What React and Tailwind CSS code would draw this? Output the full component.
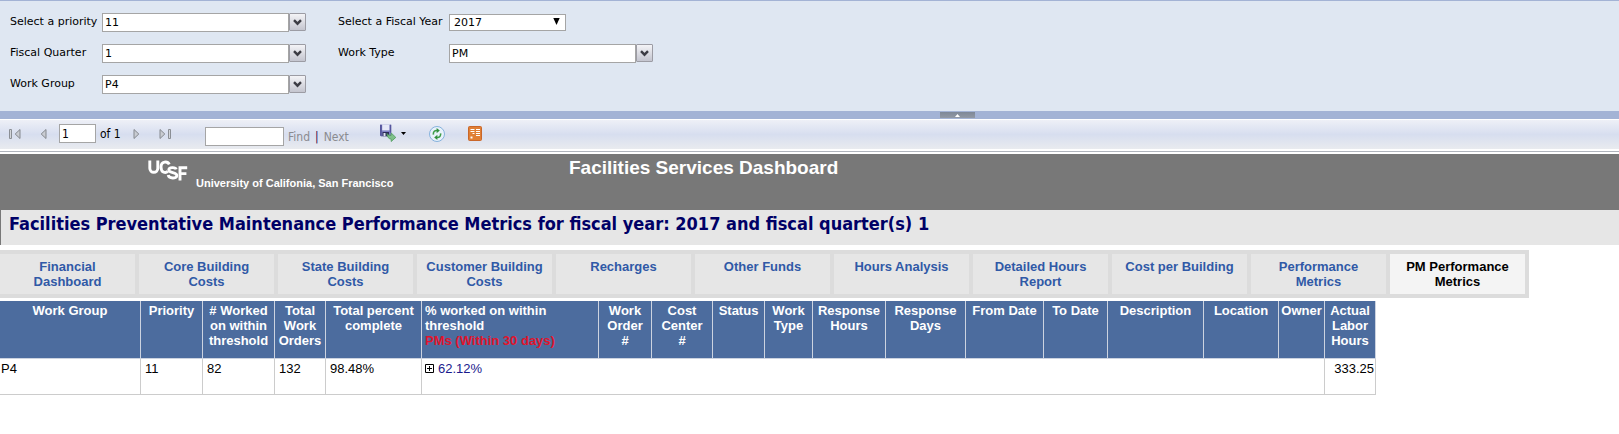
const tabs = [
  "Financial Dashboard",
  "Core Building Costs",
  "State Building Costs",
  "Customer Building Costs",
  "Recharges",
  "Other Funds",
  "Hours Analysis",
  "Detailed Hours Report",
  "Cost per Building",
  "Performance Metrics",
  "PM Performance Metrics",
];

const columns = [
  { label: "Work Group", col: "w-[141px]" },
  { label: "Priority", col: "w-[62px]" },
  { label: "# Worked on within threshold", col: "w-[72px]" },
  { label: "Total Work Orders", col: "w-[51px]" },
  { label: "Total percent complete", col: "w-[96px]" },
  {
    label: "% worked on within threshold",
    note: "PMs (Within 30 days)",
    col: "w-[177px]",
  },
  { label: "Work Order #", col: "w-[53px]", narrow: true },
  { label: "Cost Center #", col: "w-[61px]", narrow: true },
  { label: "Status", col: "w-[52px]" },
  { label: "Work Type", col: "w-[48px]" },
  { label: "Response Hours", col: "w-[73px]" },
  { label: "Response Days", col: "w-[80px]" },
  { label: "From Date", col: "w-[78px]" },
  { label: "To Date", col: "w-[64px]" },
  { label: "Description", col: "w-[96px]" },
  { label: "Location", col: "w-[75px]" },
  { label: "Owner", col: "w-[46px]" },
  { label: "Actual Labor Hours", col: "w-[51px]" },
];

function ComboField({ id, label, value }) {
  return (
    <>
      <label htmlFor={id}>{label}</label>
      <div className="flex items-start">
        <input
          id={id}
          defaultValue={value}
          className="h-[19px] w-[187px] border border-[#a5a5a5] bg-white px-0.5 outline-none"
        />
        <button
          type="button"
          aria-label={`Open ${label}`}
          className="flex h-[18px] w-[17px] items-center justify-center rounded-[1px] border border-[#9c9ca4] bg-linear-to-b from-[#f4f4f7] to-[#c4c5cf]"
        >
          <svg width="9" height="7" viewBox="0 0 9 7" fill="none">
            <path d="M1 1.2 4.5 4.7 8 1.2" stroke="#3c3c44" strokeWidth="2.4" />
          </svg>
        </button>
      </div>
    </>
  );
}

function Parameters() {
  return (
    <form className="flex h-[111px] items-start gap-8 border-t border-[#a3b3d5] bg-[#dfe7f2] pt-1.5 pl-2.5">
      <div className="grid auto-rows-[31px] grid-cols-[92px_204px] items-center">
        <ComboField id="priority" label="Select a priority" value="11" />
        <ComboField id="quarter" label="Fiscal Quarter" value="1" />
        <ComboField id="group" label="Work Group" value="P4" />
      </div>
      <div className="grid auto-rows-[31px] grid-cols-[111px_204px] items-center">
        <label htmlFor="year">Select a Fiscal Year</label>
        <div className="relative w-[117px]">
          <select
            id="year"
            defaultValue="2017"
            className="block h-[17px] w-full appearance-none border border-[#a5a5a5] bg-white pl-1 leading-none outline-none"
          >
            <option>2016</option>
            <option>2017</option>
          </select>
          <svg
            className="pointer-events-none absolute top-1 right-1.5"
            width="7"
            height="7"
            viewBox="0 0 7 7"
          >
            <path d="M.3 0h6.400L3.500 7z" fill="#000" />
          </svg>
        </div>
        <ComboField id="type" label="Work Type" value="PM" />
      </div>
    </form>
  );
}

function Splitter() {
  return (
    <div className="flex h-2 bg-[#a3b3d5]">
      <div className="w-[940px] shrink" />
      <button
        type="button"
        aria-label="Hide parameters"
        className="mt-px flex h-[6px] w-[35px] items-center justify-center bg-linear-to-b from-[#7e8897] to-[#9299a5]"
      >
        <svg width="5" height="3" viewBox="0 0 5 3">
          <path d="M0 3 2.5 0 5 3z" fill="#fff" />
        </svg>
      </button>
    </div>
  );
}

function PageArrow({ label, flip, bar, className }) {
  return (
    <button type="button" aria-label={label} className={className}>
      <svg
        width="12"
        height="12"
        viewBox="0 0 12 12"
        className={flip ? "rotate-180" : undefined}
      >
        {bar ? (
          <path d="M.5 1.500h2v9h-2z" fill="#d3d6da" stroke="#8b8f95" />
        ) : null}
        <path d="M11 1.500v9L6.200 6z" fill="#c9ccd2" stroke="#85898f" />
      </svg>
    </button>
  );
}

function SaveIcon() {
  return (
    <svg width="18" height="18" viewBox="0 0 18 18">
      <path d="M1 .8h11.200v11.500H2L1 11.300z" fill="#7f80c4" />
      <path d="M1 .8h1.800v11.500H2L1 11.300zM10.800.8h1.400v8h-1.400z" fill="#56569c" />
      <path d="M3.200.8h7.200v5.600H3.200z" fill="#e6e9f8" />
      <path d="M3.500 8h6.500v4.300H3.500z" fill="#2c2c58" />
      <path d="M4.500 9h2v3.300h-2z" fill="#dfe2f2" />
      <path
        d="M8 9.500c1 1.600 2.400 2 4.200 1.900V9l4.600 4.400-4.600 4.100v-2.400C9.800 15 8 13 8 9.500z"
        fill="#7fc08a"
        stroke="#4b9a58"
        strokeWidth=".8"
      />
    </svg>
  );
}

function RefreshIcon() {
  return (
    <svg width="16" height="16" viewBox="0 0 16 16">
      <circle cx="8" cy="8" r="7.500" fill="#e8f2fb" stroke="#86b2dc" />
      <g fill="none" stroke="#3f9e4a" strokeWidth="1.600">
        <path d="M4.400 8.600C4 6 5.500 4.400 8 4.500" />
        <path d="M11.600 7.400c.4 2.600-1.100 4.200-3.600 4.100" />
      </g>
      <path d="M7.600 2 10.800 4.600 7.600 7.200z" fill="#2f8f3c" />
      <path d="M8.400 14 5.200 11.400 8.400 8.800z" fill="#2f8f3c" />
    </svg>
  );
}

function FeedIcon() {
  return (
    <svg width="14" height="15" viewBox="0 0 14 15">
      <rect x=".5" y=".5" width="13" height="14" rx="1" fill="#e07f35" stroke="#c9672a" />
      <path
        d="M2.500 3.500h4M2.500 5.500h4M4.500 7.500h2M8 3.500h4M8 5.500h4M8 7.500h4M8 9.500h4"
        stroke="#fff"
      />
      <path d="M2.500 10.500h2v2h-2z" fill="#fff" />
    </svg>
  );
}

function Toolbar() {
  return (
    <div className="flex h-8 items-start border-t border-b-2 border-white bg-linear-to-b from-[#eef0f7] via-[#d7deef] to-[#e9ebef] pt-1 pl-2 font-['DejaVu_Sans_Condensed','DejaVu_Sans',sans-serif] text-xs">
      <div className="flex items-center">
        <PageArrow label="First page" bar className="ml-px" />
        <PageArrow label="Previous page" className="ml-3.5" />
        <input
          aria-label="Current page"
          defaultValue="1"
          className="ml-3 h-[19px] w-[37px] border border-[#a5a5a5] bg-white px-0.5 outline-none"
        />
        <span className="ml-1 w-[21px] whitespace-nowrap">of 1</span>
        <PageArrow label="Next page" flip className="ml-3" />
        <PageArrow label="Last page" flip bar className="ml-3.5" />
      </div>
      <div className="mt-[3px] ml-[34px] flex items-center">
        <input
          aria-label="Find text"
          className="h-[19px] w-[79px] border border-[#a5a5a5] bg-white px-0.5 outline-none"
        />
        <button type="button" className="ml-1 text-[#8b8b8f]">
          Find
        </button>
        <span className="mx-[5px] text-[#3a0a4a]">|</span>
        <button type="button" className="text-[#8b8b8f]">
          Next
        </button>
      </div>
      <button
        type="button"
        aria-label="Export"
        className="ml-[30px] flex items-center gap-1"
      >
        <SaveIcon />
        <svg width="5" height="3" viewBox="0 0 5 3">
          <path d="M0 0h5L2.500 3z" fill="#000" />
        </svg>
      </button>
      <button type="button" aria-label="Refresh" className="mt-0.5 ml-[23px]">
        <RefreshIcon />
      </button>
      <button
        type="button"
        aria-label="Export to data feed"
        className="mt-0.5 ml-[23px]"
      >
        <FeedIcon />
      </button>
    </div>
  );
}

function UcsfLogo() {
  return (
    <svg width="40" height="21" viewBox="0 0 40 21" role="img" aria-label="UCSF">
      <g fill="none" stroke="#fff" strokeWidth="2.900">
        <path d="M1.800.5v7.800a4 4 0 0 0 8 0V.5" />
        <path d="M21.300 4.300C19.500.8 13 .9 13 7c0 6.200 5 6.300 6.800 4.200" />
        <path d="M28.200 9.400c-.8-2.600-7.400-2.400-7.400.6 0 3.400 8 1.900 8 5.400 0 3.700-8 3.400-8.600-.3" />
        <path d="M32 20.500V7.700h7.200M32 13.600h6.400" />
      </g>
    </svg>
  );
}

function Banner() {
  return (
    <header className="flex h-14 bg-[#787878] font-bold text-white">
      <div className="flex w-[569px] items-start pt-1.5 pl-[148px]">
        <UcsfLogo />
        <p className="mt-[15px] ml-2 text-[11px] leading-4">
          University of Califonia, San Francisco
        </p>
      </div>
      <p className="pt-1 text-[19px] leading-5">Facilities Services Dashboard</p>
    </header>
  );
}

function Tabs() {
  return (
    <nav className="mt-[5px] flex w-max gap-1 bg-[#dcdcdc] py-1 pr-1 text-[13px] leading-[15px] font-bold">
      {tabs.map((tab, i) => {
        const active = i === tabs.length - 1;
        return (
          <a
            key={tab}
            href="#"
            aria-current={active ? "page" : undefined}
            className={
              active
                ? "h-10 w-[135px] bg-[#f4f4f4] px-2 pt-[5px] text-center text-black"
                : "h-10 w-[135px] bg-[#e6e6e6] px-2 pt-[5px] text-center text-[#3059a6]"
            }
          >
            {tab}
          </a>
        );
      })}
    </nav>
  );
}

function headClass({ note, narrow }) {
  if (note) {
    return "border-r border-b border-[#ccd3e0] pt-0.5 pr-8 pl-[3px] text-left";
  }
  return narrow
    ? "border-r border-b border-[#ccd3e0] px-1.5 pt-0.5 text-center"
    : "border-r border-b border-[#ccd3e0] px-0.5 pt-0.5 text-center";
}

function MetricsTable() {
  const cell = "border-r border-b border-[#ccc] pt-0.5 pl-1";
  return (
    <table className="mt-[3px] w-[1376px] table-fixed border-separate border-spacing-0 text-[13px] leading-[15px]">
      <colgroup>
        {columns.map((c) => (
          <col key={c.label} className={c.col} />
        ))}
      </colgroup>
      <thead>
        <tr className="h-[58px] bg-[#4c6c9e] align-top text-white">
          {columns.map((c) => (
            <th key={c.label} scope="col" className={headClass(c)}>
              {c.label}
              {c.note ? (
                <span className="block text-[#e0142c]">{c.note}</span>
              ) : null}
            </th>
          ))}
        </tr>
      </thead>
      <tbody>
        <tr className="h-9 align-top">
          <td className="border-r border-b border-[#ccc] pt-0.5 pl-px">P4</td>
          <td className={cell}>11</td>
          <td className={cell}>82</td>
          <td className={cell}>132</td>
          <td className={cell}>98.48%</td>
          <td className="border-b border-[#ccc] pt-0.5 pl-[3px]" colSpan={11}>
            <div className="flex items-center gap-1">
              <button type="button" aria-label="Expand details">
                <svg width="9" height="9" viewBox="0 0 9 9" className="block">
                  <path
                    d="M.5.5h8v8h-8zM2 4.500h5M4.500 2v5"
                    fill="#fff"
                    stroke="#000"
                  />
                </svg>
              </button>
              <a href="#" className="text-[#1a1a8c]">
                62.12%
              </a>
            </div>
          </td>
          <td className="border-r border-b border-[#ccc]" />
          <td className="border-r border-b border-[#ccc] pt-0.5 pr-px text-right">
            333.25
          </td>
        </tr>
      </tbody>
    </table>
  );
}

export default function App() {
  return (
    <div className="bg-white font-['Liberation_Sans',Arial,sans-serif] text-black">
      <div className="font-['DejaVu_Sans',Verdana,sans-serif] text-[11px]">
        <Parameters />
        <Splitter />
        <Toolbar />
      </div>
      <div className="h-[3px] border-t border-[#b0b4bc] bg-white" />
      <Banner />
      <h1 className="h-[35px] border-l border-[#787878] bg-[#e6e6e6] pt-0.5 pl-2 font-['DejaVu_Sans_Condensed','DejaVu_Sans',sans-serif] text-lg leading-6 font-bold text-[#000066]">
        Facilities Preventative Maintenance Performance Metrics for fiscal year:
        2017 and fiscal quarter(s) 1
      </h1>
      <Tabs />
      <MetricsTable />
    </div>
  );
}
